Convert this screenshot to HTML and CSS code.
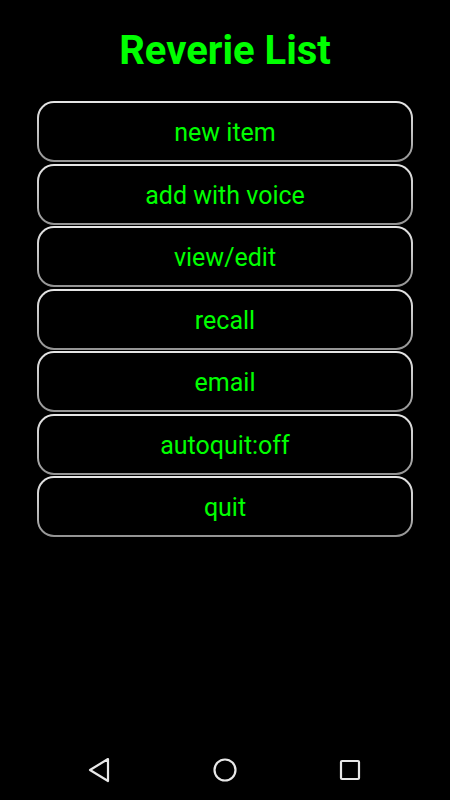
FILE: index.html
```html
<!DOCTYPE html>
<html>
<head>
<meta charset="utf-8">
<link rel="stylesheet" href="styles.css">
</head>
<body>
<div class="screen">
  <h1 class="title">Reverie List</h1>
  <div class="menu">
    <div class="btn"><div class="btn-inner">new item</div></div>
    <div class="btn"><div class="btn-inner">add with voice</div></div>
    <div class="btn"><div class="btn-inner">view/edit</div></div>
    <div class="btn"><div class="btn-inner">recall</div></div>
    <div class="btn"><div class="btn-inner">email</div></div>
    <div class="btn"><div class="btn-inner">autoquit:off</div></div>
    <div class="btn"><div class="btn-inner">quit</div></div>
  </div>
  <div class="navbar">
    <svg class="nav-icon" width="24" height="26" viewBox="0 0 24 26"><path d="M21 2 L3 13 L21 24 Z" fill="none" stroke="#e8e8e8" stroke-width="2.2" stroke-linejoin="round"/></svg>
    <svg class="nav-icon" width="26" height="26" viewBox="0 0 26 26"><circle cx="13" cy="13" r="10.5" fill="none" stroke="#e8e8e8" stroke-width="2.2"/></svg>
    <svg class="nav-icon" width="24" height="24" viewBox="0 0 24 24"><rect x="3" y="3" width="18" height="18" rx="1" fill="none" stroke="#e8e8e8" stroke-width="2.2"/></svg>
  </div>
</div>
</body>
</html>
```
FILE: styles.css
```css
html, body {
  margin: 0;
  padding: 0;
  background: #000;
}
.screen {
  width: 450px;
  height: 800px;
  display: flex;
  flex-direction: column;
  font-family: Roboto, "Liberation Sans", sans-serif;
}
.title {
  margin: 0;
  padding-top: 26px;
  height: 101px;
  flex: none;
  box-sizing: border-box;
  text-align: center;
  color: #00ff00;
  font-size: 40px;
  font-weight: 700;
  line-height: 50px;
}
.menu {
  display: flex;
  flex-direction: column;
  gap: 1.5px;
  padding: 0 37px 0 37px;
  flex: 1;
}
.btn {
  height: 61px;
  flex: none;
  box-sizing: border-box;
  padding: 2px;
  border-radius: 17px;
  background: linear-gradient(to bottom, #e6e6e6 0%, #c4c4c4 50%, #929292 100%);
}
.btn-inner {
  height: 100%;
  box-sizing: border-box;
  padding-top: 2px;
  border-radius: 15px;
  background: #000;
  color: #00ff00;
  font-size: 25px;
  display: flex;
  align-items: center;
  justify-content: center;
}
.navbar {
  height: 60px;
  flex: none;
  display: flex;
  align-items: center;
  justify-content: space-between;
  padding: 0 88px 0 87px;
  box-sizing: border-box;
}
.nav-icon {
  display: block;
}
```
